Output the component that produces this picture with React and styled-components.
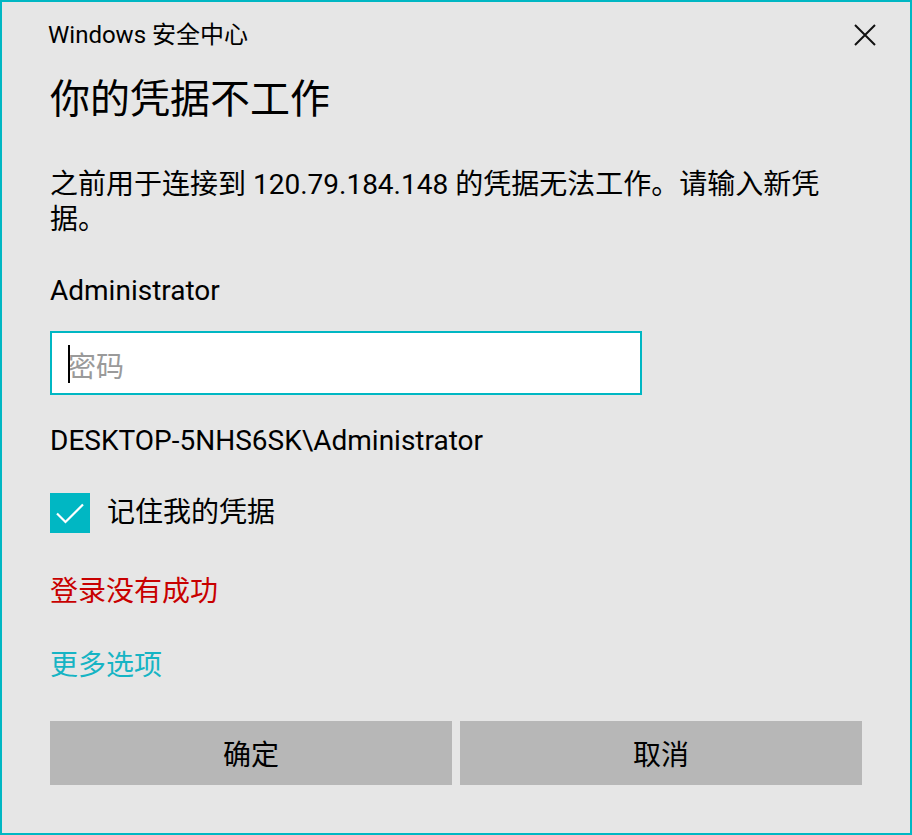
import React, { useState } from 'react';
import styled, { createGlobalStyle } from 'styled-components';

const GlobalStyle = createGlobalStyle`
  html, body {
    margin: 0;
    padding: 0;
    background: #e6e6e6;
  }
  * {
    box-sizing: border-box;
  }
`;

const FONT = `Roboto, "Noto Sans CJK SC", sans-serif`;

export default function App() {
  const [remember, setRemember] = useState(true);
  const [password, setPassword] = useState('');

  return (
    <>
      <GlobalStyle />
      <Dialog>
        <TitleBar>
          <Caption>Windows 安全中心</Caption>
          <CloseButton aria-label="关闭">
            <svg width="22" height="22" viewBox="0 0 22 22">
              <path d="M1 1 L21 21 M21 1 L1 21" stroke="#111" strokeWidth="2" fill="none" />
            </svg>
          </CloseButton>
        </TitleBar>

        <Heading>你的凭据不工作</Heading>

        <Message>
          之前用于连接到 120.79.184.148 的凭据无法工作。请输入新凭据。
        </Message>

        <UserName>Administrator</UserName>

        <InputWrap>
          <PasswordInput
            type="password"
            placeholder="密码"
            value={password}
            onChange={(e) => setPassword(e.target.value)}
          />
          {password === '' && <Caret />}
        </InputWrap>

        <Domain>DESKTOP-5NHS6SK\Administrator</Domain>

        <CheckRow onClick={() => setRemember((v) => !v)}>
          <CheckBox $checked={remember}>
            {remember && (
              <svg width="40" height="40" viewBox="0 0 40 40">
                <path d="M7 20.5 L15.5 29 L33 11.5" stroke="#fff" strokeWidth="2.2" fill="none" />
              </svg>
            )}
          </CheckBox>
          <CheckLabel>记住我的凭据</CheckLabel>
        </CheckRow>

        <ErrorText>登录没有成功</ErrorText>

        <MoreLink href="#">更多选项</MoreLink>

        <Buttons>
          <Button>确定</Button>
          <Button>取消</Button>
        </Buttons>
      </Dialog>
    </>
  );
}

const Dialog = styled.div`
  height: 100vh;
  border: 2px solid #00b7c3;
  background: #e6e6e6;
  padding: 0 48px;
  display: flex;
  flex-direction: column;
  font-family: ${FONT};
  color: #000;
`;

const TitleBar = styled.div`
  display: flex;
  align-items: center;
  justify-content: space-between;
  height: 66px;
  margin-right: -14px;
`;

const Caption = styled.div`
  font-size: 24px;
  line-height: 28px;
  margin-left: -2px;
`;

const CloseButton = styled.button`
  border: 0;
  background: transparent;
  padding: 0;
  width: 22px;
  height: 22px;
  display: flex;
  cursor: pointer;
`;

const Heading = styled.h1`
  margin: 10px 0 0;
  font-size: 40px;
  font-weight: 400;
  line-height: 44px;
`;

const Message = styled.p`
  margin: 45px 0 0;
  font-size: 28px;
  line-height: 35px;
  max-width: 780px;
`;

const UserName = styled.div`
  margin-top: 36px;
  font-size: 28px;
  line-height: 36px;
`;

const InputWrap = styled.div`
  position: relative;
  margin-top: 22px;
  width: 592px;
`;

const PasswordInput = styled.input`
  display: block;
  width: 100%;
  height: 64px;
  border: 2px solid #00b7c3;
  background: #fff;
  padding: 9px 16px 0;
  font-family: ${FONT};
  font-size: 28px;
  outline: none;
  caret-color: #000;

  &::placeholder {
    color: #9a9a9a;
  }
`;

const Caret = styled.span`
  position: absolute;
  left: 18px;
  top: 14px;
  width: 2px;
  height: 38px;
  background: #000;
  pointer-events: none;
`;

const Domain = styled.div`
  margin-top: 28px;
  font-size: 28px;
  line-height: 36px;
`;

const CheckRow = styled.label`
  margin-top: 34px;
  display: flex;
  align-items: center;
  gap: 17px;
  cursor: pointer;
`;

const CheckBox = styled.span`
  width: 40px;
  height: 40px;
  flex: none;
  display: flex;
  background: ${(p) => (p.$checked ? '#00b7c3' : '#fff')};
  border: ${(p) => (p.$checked ? '0' : '2px solid #000')};
`;

const CheckLabel = styled.span`
  font-size: 28px;
  line-height: 36px;
`;

const ErrorText = styled.div`
  margin-top: 41px;
  font-size: 28px;
  line-height: 36px;
  color: #c80000;
`;

const MoreLink = styled.a`
  margin-top: 38px;
  font-size: 28px;
  line-height: 36px;
  color: #16b4c4;
  text-decoration: none;
  align-self: flex-start;
`;

const Buttons = styled.div`
  margin-top: 37px;
  display: grid;
  grid-template-columns: 1fr 1fr;
  gap: 8px;
`;

const Button = styled.button`
  height: 64px;
  border: 0;
  background: #b7b7b7;
  font-family: ${FONT};
  font-size: 28px;
  color: #000;
  cursor: pointer;
`;
